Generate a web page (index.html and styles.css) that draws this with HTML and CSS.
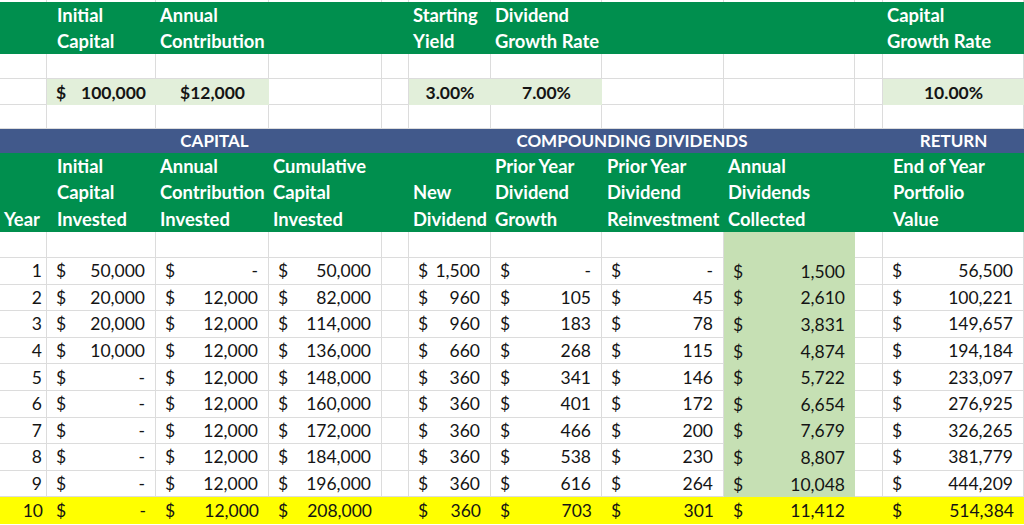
FILE: index.html
```html
<!DOCTYPE html>
<html lang="en">
<head>
<meta charset="utf-8">
<title>Dividend Growth Model</title>
<link rel="stylesheet" href="styles.css">
</head>
<body>
<div class="sheet">
  <!-- strip -->
  <div class="c w strip"></div><div class="c w strip"></div><div class="c w strip"></div><div class="c w strip"></div><div class="c w strip"></div><div class="c w strip"></div><div class="c w strip"></div><div class="c w strip"></div><div class="c w strip"></div><div class="c w strip"></div><div class="c w strip"></div>

  <!-- top header -->
  <div class="c g g2"></div>
  <div class="c g g2 ind">Initial<br>Capital</div>
  <div class="c g g2">Annual<br>Contribution</div>
  <div class="c g g2"></div>
  <div class="c g g2"></div>
  <div class="c g g2">Starting<br>Yield</div>
  <div class="c g g2">Dividend<br>Growth Rate</div>
  <div class="c g g2"></div>
  <div class="c g g2"></div>
  <div class="c g g2"></div>
  <div class="c g g2">Capital<br>Growth Rate</div>

  <!-- blank row -->
  <div class="c w"></div><div class="c w"></div><div class="c w"></div><div class="c w"></div><div class="c w"></div><div class="c w"></div><div class="c w"></div><div class="c w"></div><div class="c w"></div><div class="c w"></div><div class="c w"></div>

  <!-- inputs -->
  <div class="c w"></div>
  <div class="c inp acc"><span>$</span><span>100,000</span></div>
  <div class="c inp ctr">$12,000</div>
  <div class="c w"></div>
  <div class="c w"></div>
  <div class="c inp ctr">3.00%</div>
  <div class="c inp ctr">7.00%</div>
  <div class="c w"></div>
  <div class="c w"></div>
  <div class="c w"></div>
  <div class="c inp ctr">10.00%</div>

  <!-- blank row -->
  <div class="c w"></div><div class="c w"></div><div class="c w"></div><div class="c w"></div><div class="c w"></div><div class="c w"></div><div class="c w"></div><div class="c w"></div><div class="c w"></div><div class="c w"></div><div class="c w"></div>

  <!-- section band -->
  <div class="c band"></div>
  <div class="c band span3">CAPITAL</div>
  <div class="c band"></div>
  <div class="c band span4">COMPOUNDING DIVIDENDS</div>
  <div class="c band"></div>
  <div class="c band">RETURN</div>

  <!-- column headers -->
  <div class="c g g3 yearhd">Year</div>
  <div class="c g g3 ind">Initial<br>Capital<br>Invested</div>
  <div class="c g g3">Annual<br>Contribution<br>Invested</div>
  <div class="c g g3">Cumulative<br>Capital<br>Invested</div>
  <div class="c g g3"></div>
  <div class="c g g3">New<br>Dividend</div>
  <div class="c g g3">Prior Year<br>Dividend<br>Growth</div>
  <div class="c g g3 wide">Prior Year<br>Dividend<br>Reinvestment</div>
  <div class="c g g3">Annual<br>Dividends<br>Collected</div>
  <div class="c g g3"></div>
  <div class="c g g3 ind">End of Year<br>Portfolio<br>Value</div>

  <!-- blank row -->
  <div class="c w"></div><div class="c w"></div><div class="c w"></div><div class="c w"></div><div class="c w"></div><div class="c w"></div><div class="c w"></div><div class="c w"></div><div class="c fill"></div><div class="c w"></div><div class="c w"></div>

  <!-- year 1 -->
  <div class="c w yr">1</div>
  <div class="c w acc"><span>$</span><span>50,000</span></div>
  <div class="c w acc"><span>$</span><span>-</span></div>
  <div class="c w acc"><span>$</span><span>50,000</span></div>
  <div class="c w"></div>
  <div class="c w acc"><span>$</span><span>1,500</span></div>
  <div class="c w acc"><span>$</span><span>-</span></div>
  <div class="c w acc"><span>$</span><span>-</span></div>
  <div class="c fill acc"><span>$</span><span>1,500</span></div>
  <div class="c w"></div>
  <div class="c w acc"><span>$</span><span>56,500</span></div>

  <!-- year 2 -->
  <div class="c w yr">2</div>
  <div class="c w acc"><span>$</span><span>20,000</span></div>
  <div class="c w acc"><span>$</span><span>12,000</span></div>
  <div class="c w acc"><span>$</span><span>82,000</span></div>
  <div class="c w"></div>
  <div class="c w acc"><span>$</span><span>960</span></div>
  <div class="c w acc"><span>$</span><span>105</span></div>
  <div class="c w acc"><span>$</span><span>45</span></div>
  <div class="c fill acc"><span>$</span><span>2,610</span></div>
  <div class="c w"></div>
  <div class="c w acc"><span>$</span><span>100,221</span></div>

  <!-- year 3 -->
  <div class="c w yr">3</div>
  <div class="c w acc"><span>$</span><span>20,000</span></div>
  <div class="c w acc"><span>$</span><span>12,000</span></div>
  <div class="c w acc"><span>$</span><span>114,000</span></div>
  <div class="c w"></div>
  <div class="c w acc"><span>$</span><span>960</span></div>
  <div class="c w acc"><span>$</span><span>183</span></div>
  <div class="c w acc"><span>$</span><span>78</span></div>
  <div class="c fill acc"><span>$</span><span>3,831</span></div>
  <div class="c w"></div>
  <div class="c w acc"><span>$</span><span>149,657</span></div>

  <!-- year 4 -->
  <div class="c w yr">4</div>
  <div class="c w acc"><span>$</span><span>10,000</span></div>
  <div class="c w acc"><span>$</span><span>12,000</span></div>
  <div class="c w acc"><span>$</span><span>136,000</span></div>
  <div class="c w"></div>
  <div class="c w acc"><span>$</span><span>660</span></div>
  <div class="c w acc"><span>$</span><span>268</span></div>
  <div class="c w acc"><span>$</span><span>115</span></div>
  <div class="c fill acc"><span>$</span><span>4,874</span></div>
  <div class="c w"></div>
  <div class="c w acc"><span>$</span><span>194,184</span></div>

  <!-- year 5 -->
  <div class="c w yr">5</div>
  <div class="c w acc"><span>$</span><span>-</span></div>
  <div class="c w acc"><span>$</span><span>12,000</span></div>
  <div class="c w acc"><span>$</span><span>148,000</span></div>
  <div class="c w"></div>
  <div class="c w acc"><span>$</span><span>360</span></div>
  <div class="c w acc"><span>$</span><span>341</span></div>
  <div class="c w acc"><span>$</span><span>146</span></div>
  <div class="c fill acc"><span>$</span><span>5,722</span></div>
  <div class="c w"></div>
  <div class="c w acc"><span>$</span><span>233,097</span></div>

  <!-- year 6 -->
  <div class="c w yr">6</div>
  <div class="c w acc"><span>$</span><span>-</span></div>
  <div class="c w acc"><span>$</span><span>12,000</span></div>
  <div class="c w acc"><span>$</span><span>160,000</span></div>
  <div class="c w"></div>
  <div class="c w acc"><span>$</span><span>360</span></div>
  <div class="c w acc"><span>$</span><span>401</span></div>
  <div class="c w acc"><span>$</span><span>172</span></div>
  <div class="c fill acc"><span>$</span><span>6,654</span></div>
  <div class="c w"></div>
  <div class="c w acc"><span>$</span><span>276,925</span></div>

  <!-- year 7 -->
  <div class="c w yr">7</div>
  <div class="c w acc"><span>$</span><span>-</span></div>
  <div class="c w acc"><span>$</span><span>12,000</span></div>
  <div class="c w acc"><span>$</span><span>172,000</span></div>
  <div class="c w"></div>
  <div class="c w acc"><span>$</span><span>360</span></div>
  <div class="c w acc"><span>$</span><span>466</span></div>
  <div class="c w acc"><span>$</span><span>200</span></div>
  <div class="c fill acc"><span>$</span><span>7,679</span></div>
  <div class="c w"></div>
  <div class="c w acc"><span>$</span><span>326,265</span></div>

  <!-- year 8 -->
  <div class="c w yr">8</div>
  <div class="c w acc"><span>$</span><span>-</span></div>
  <div class="c w acc"><span>$</span><span>12,000</span></div>
  <div class="c w acc"><span>$</span><span>184,000</span></div>
  <div class="c w"></div>
  <div class="c w acc"><span>$</span><span>360</span></div>
  <div class="c w acc"><span>$</span><span>538</span></div>
  <div class="c w acc"><span>$</span><span>230</span></div>
  <div class="c fill acc"><span>$</span><span>8,807</span></div>
  <div class="c w"></div>
  <div class="c w acc"><span>$</span><span>381,779</span></div>

  <!-- year 9 -->
  <div class="c w yr">9</div>
  <div class="c w acc"><span>$</span><span>-</span></div>
  <div class="c w acc"><span>$</span><span>12,000</span></div>
  <div class="c w acc"><span>$</span><span>196,000</span></div>
  <div class="c w"></div>
  <div class="c w acc"><span>$</span><span>360</span></div>
  <div class="c w acc"><span>$</span><span>616</span></div>
  <div class="c w acc"><span>$</span><span>264</span></div>
  <div class="c fill acc"><span>$</span><span>10,048</span></div>
  <div class="c w"></div>
  <div class="c w acc"><span>$</span><span>444,209</span></div>

  <!-- year 10 (highlighted) -->
  <div class="c hl yr">10</div>
  <div class="c hl acc"><span>$</span><span>-</span></div>
  <div class="c hl acc"><span>$</span><span>12,000</span></div>
  <div class="c hl acc"><span>$</span><span>208,000</span></div>
  <div class="c hl"></div>
  <div class="c hl acc"><span>$</span><span>360</span></div>
  <div class="c hl acc"><span>$</span><span>703</span></div>
  <div class="c hl acc"><span>$</span><span>301</span></div>
  <div class="c hl acc"><span>$</span><span>11,412</span></div>
  <div class="c hl"></div>
  <div class="c hl acc"><span>$</span><span>514,384</span></div>
</div>
</body>
</html>
```

FILE: styles.css
```css
* { box-sizing: border-box; margin: 0; padding: 0; }

html, body { background: #ffffff; }

body {
  width: 1024px;
  height: 525px;
  overflow: hidden;
  font-family: Lato, "Open Sans", "Liberation Sans", sans-serif;
  color: #141414;
}

.sheet {
  display: grid;
  grid-template-columns: 47px 109px 113px 113px 27px 82px 111px 122px 131px 28px 141px;
  grid-template-rows: 2px 26px 26px 25px 26px 24px 24px 26px 27px 26px 26px repeat(10, 26.6px);
  font-size: 17.5px;
}

.c {
  min-width: 0;
  white-space: nowrap;
}

/* plain white cell with gridlines */
.w {
  border-right: 1px solid #dcdcdc;
  border-bottom: 1px solid #dcdcdc;
}

.strip { border-bottom: none; }

/* green header cells */
.g {
  background: #008f4e;
  color: #ffffff;
  font-weight: 700;
  font-size: 18.4px;
  line-height: 26px;
  padding-left: 4px;
}

.g2 { grid-row: span 2; }

.g3 {
  grid-row: span 3;
  display: flex;
  flex-direction: column;
  justify-content: flex-end;
  line-height: 26.3px;
}

.g.ind { padding-left: 10px; }
.g.yearhd { padding-left: 4px; }
.g.wide { padding-left: 5px; overflow: visible; }

/* input cells */
.inp {
  background: #e2efda;
  font-weight: 700;
}

.ctr {
  display: flex;
  align-items: center;
  justify-content: center;
}

/* section band */
.band {
  background: #41598b;
  color: #ffffff;
  font-weight: 700;
  font-size: 17px;
  text-align: center;
  line-height: 24px;
}

.span3 { grid-column: span 3; }
.span4 { grid-column: span 4; }

/* accounting number format */
.acc {
  display: flex;
  align-items: center;
  justify-content: space-between;
  padding: 0 10px 0 9px;
}

.yr {
  display: flex;
  align-items: center;
  justify-content: flex-end;
  padding-right: 4px;
}

/* annual dividends column fill */
.fill { background: #c6e0b4; }

/* highlighted final year */
.hl { background: #ffff00; }
```
